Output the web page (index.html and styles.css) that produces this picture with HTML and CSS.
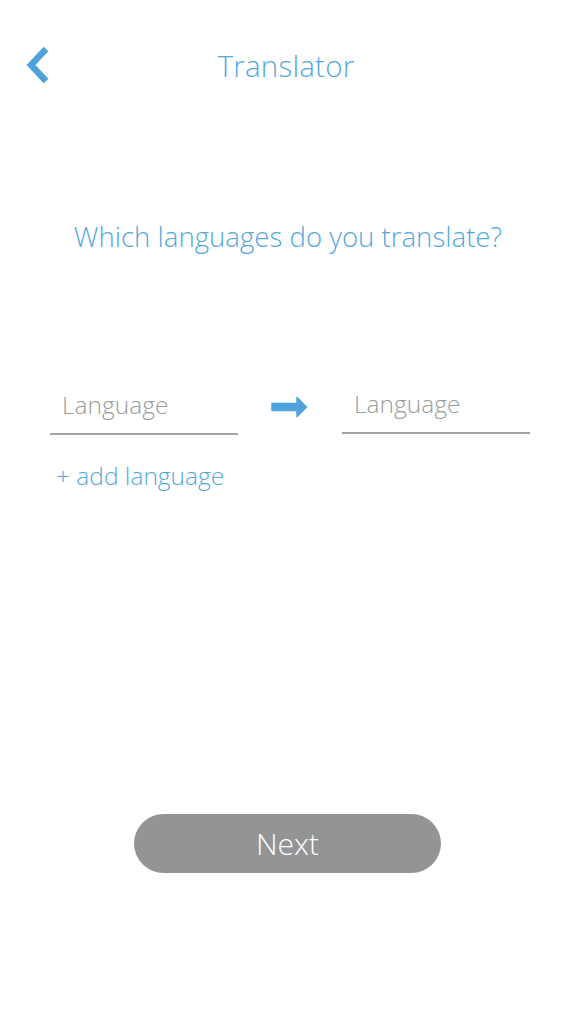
FILE: index.html
```html
<!DOCTYPE html>
<html>
<head>
<meta charset="utf-8">
<link rel="stylesheet" href="styles.css">
</head>
<body>
<div class="screen">
  <header class="header">
    <button class="back" aria-label="Back">
      <svg width="26" height="38" viewBox="0 0 26 38"><path d="M21 3 L6 19 L21 35" fill="none" stroke="#4fa3dc" stroke-width="6.5" stroke-linecap="butt" stroke-linejoin="miter"/></svg>
    </button>
    <h1 class="title">Translator</h1>
    <span class="spacer"></span>
  </header>
  <h2 class="question">Which languages do you translate?</h2>
  <div class="pair">
    <div class="field"><span class="placeholder">Language</span></div>
    <svg class="arrow" width="38" height="22" viewBox="0 0 38 22"><path d="M2 7.5 H27 V1.5 L36.5 11 L27 20.5 V14.5 H2 Z" fill="#4fa3dc" stroke="#4fa3dc" stroke-width="1.5" stroke-linejoin="round"/></svg>
    <div class="field field-right"><span class="placeholder">Language</span></div>
  </div>
  <div class="add">+ add language</div>
  <div class="actions">
    <button class="next">Next</button>
  </div>
</div>
</body>
</html>
```
FILE: styles.css
```css
html, body {
  margin: 0;
  padding: 0;
  background: #ffffff;
}
.screen {
  width: 576px;
  height: 1024px;
  font-family: "Open Sans", "Liberation Sans", sans-serif;
  font-weight: 300;
  color: #55a8de;
}
.header {
  height: 130px;
  display: grid;
  grid-template-columns: 80px 1fr 80px;
  align-items: center;
}
.back {
  background: none;
  border: 0;
  padding: 0 0 0 25px;
  height: 40px;
  display: flex;
  align-items: center;
  cursor: pointer;
}
.title {
  margin: 0 0 0 -4px;
  text-align: center;
  font-size: 29.5px;
  font-weight: 300;
  color: #55a8de;
  letter-spacing: 0.2px;
}
.question {
  margin: 86px 0 0;
  text-align: center;
  font-size: 27.6px;
  font-weight: 300;
  line-height: 40px;
  color: #55a8de;
}
.pair {
  margin-top: 127px;
  padding: 0 46px 0 50px;
  display: flex;
  justify-content: space-between;
  align-items: center;
}
.field {
  width: 188px;
  height: 52px;
  border-bottom: 2px solid #a3a3a3;
  box-sizing: border-box;
  padding: 0 0 8px 12px;
  display: flex;
  align-items: center;
}
.field-right {
  margin-top: -2px;
}
.placeholder {
  font-size: 24.5px;
  color: #9b9b9b;
}
.arrow {
  margin-left: -2px;
  margin-top: -4px;
}
.add {
  margin: 24px 0 0 56px;
  font-size: 24.5px;
  line-height: 34px;
}
.actions {
  margin-top: 321px;
  display: flex;
  justify-content: center;
}
.next {
  width: 307px;
  height: 59px;
  margin-left: -1px;
  border: 0;
  border-radius: 30px;
  background: #939495;
  color: #ffffff;
  font-family: "Open Sans", "Liberation Sans", sans-serif;
  font-weight: 300;
  font-size: 30px;
  padding: 0;
}
```
